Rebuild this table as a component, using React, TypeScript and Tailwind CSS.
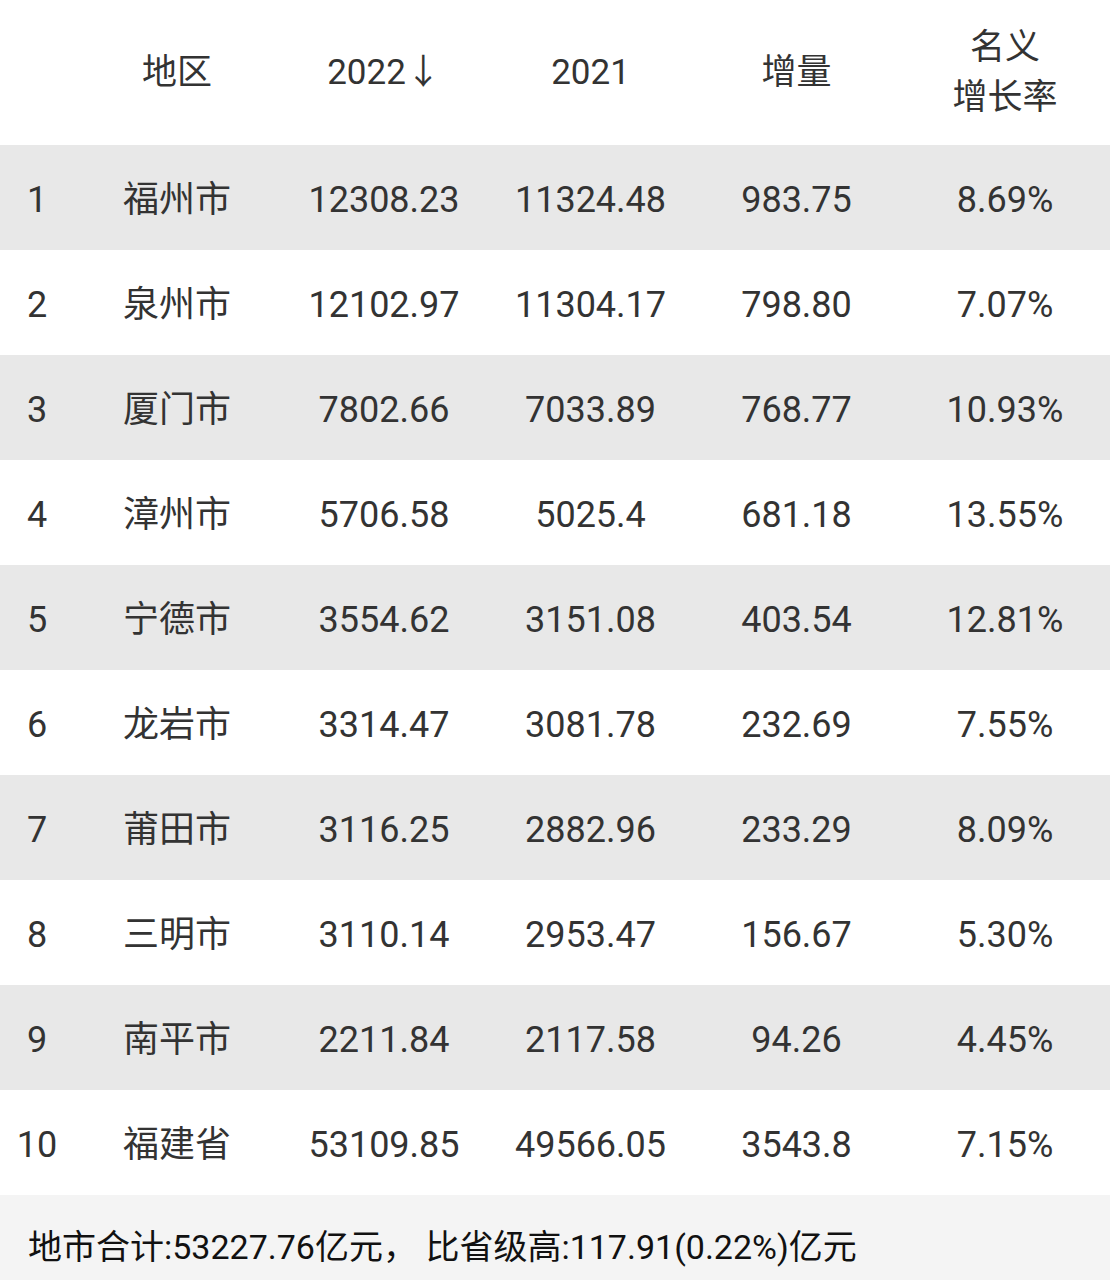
import React from 'react';

type Row = {
    rank: number;
    region: string;
    y2022: string;
    y2021: string;
    delta: string;
    rate: string;
};

const rows: Row[] = [
    { rank: 1, region: '福州市', y2022: '12308.23', y2021: '11324.48', delta: '983.75', rate: '8.69%' },
    { rank: 2, region: '泉州市', y2022: '12102.97', y2021: '11304.17', delta: '798.80', rate: '7.07%' },
    { rank: 3, region: '厦门市', y2022: '7802.66', y2021: '7033.89', delta: '768.77', rate: '10.93%' },
    { rank: 4, region: '漳州市', y2022: '5706.58', y2021: '5025.4', delta: '681.18', rate: '13.55%' },
    { rank: 5, region: '宁德市', y2022: '3554.62', y2021: '3151.08', delta: '403.54', rate: '12.81%' },
    { rank: 6, region: '龙岩市', y2022: '3314.47', y2021: '3081.78', delta: '232.69', rate: '7.55%' },
    { rank: 7, region: '莆田市', y2022: '3116.25', y2021: '2882.96', delta: '233.29', rate: '8.09%' },
    { rank: 8, region: '三明市', y2022: '3110.14', y2021: '2953.47', delta: '156.67', rate: '5.30%' },
    { rank: 9, region: '南平市', y2022: '2211.84', y2021: '2117.58', delta: '94.26', rate: '4.45%' },
    { rank: 10, region: '福建省', y2022: '53109.85', y2021: '49566.05', delta: '3543.8', rate: '7.15%' },
];

const gridCols = 'grid grid-cols-[74px_206px_208px_205px_207px_210px]';

const App: React.FC = () => {
    return (
        <div
            className="w-[1110px] h-[1280px] bg-white text-[#333333] overflow-hidden"
            style={{ fontFamily: 'Roboto, "Noto Sans CJK SC", sans-serif' }}
        >
            {/* header */}
            <div className={`${gridCols} h-[145px] items-center text-[35px] leading-[50px]`}>
                <div />
                <div className="text-center">地区</div>
                <div className="text-center">2022↓</div>
                <div className="text-center">2021</div>
                <div className="text-center">增量</div>
                <div className="text-center">
                    名义
                    <br />
                    增长率
                </div>
            </div>

            {rows.map((row) => (
                <div
                    key={row.rank}
                    className={`${gridCols} h-[105px] pt-[4px] items-center text-[36px] ${row.rank % 2 === 1 ? 'bg-[#e8e8e8]' : 'bg-white'}`}
                >
                    <div className="text-center">{row.rank}</div>
                    <div className="text-center">{row.region}</div>
                    <div className="text-center">{row.y2022}</div>
                    <div className="text-center">{row.y2021}</div>
                    <div className="text-center">{row.delta}</div>
                    <div className="text-center">{row.rate}</div>
                </div>
            ))}

            {/* summary */}
            <div className="h-[85px] bg-[#f4f4f4] flex items-center pt-[20px] pl-[28px] text-[34px] text-[#111111] whitespace-nowrap">
                地市合计:53227.76亿元，&nbsp;比省级高:117.91(0.22%)亿元
            </div>
        </div>
    );
};

export default App;
